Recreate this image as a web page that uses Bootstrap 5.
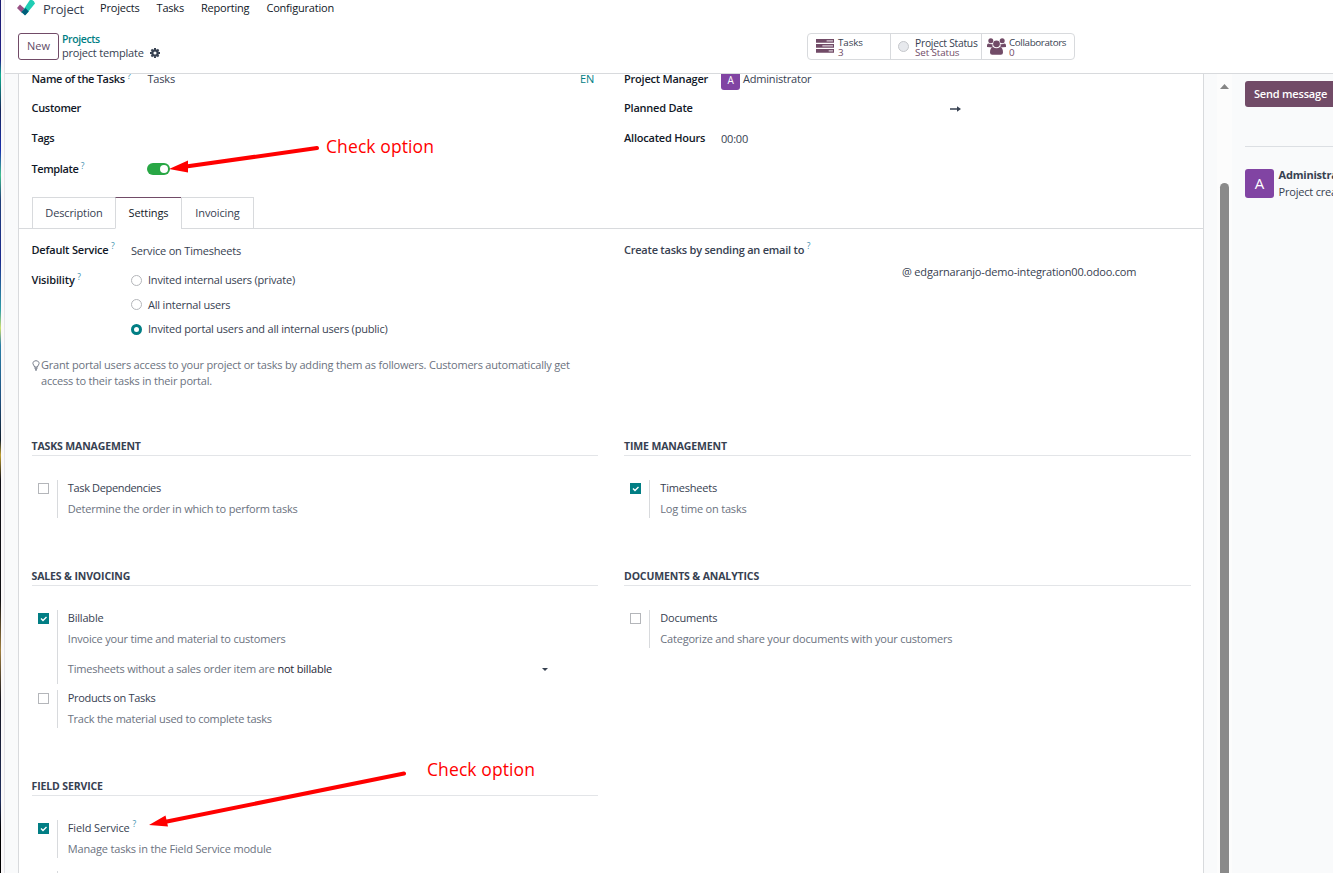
<!DOCTYPE html>
<html lang="en">
<head>
<meta charset="utf-8">
<title>project template</title>
<link rel="stylesheet" href="https://cdn.jsdelivr.net/npm/bootstrap@5.3.0/dist/css/bootstrap.min.css">
<style>
body{font:11px/16px "Open Sans","Noto Sans",sans-serif;color:#374151;letter-spacing:-.2px;height:873px;overflow:hidden;white-space:nowrap}
.edge{width:1px;background:linear-gradient(#1b1b70 0,#23238a 60px,#10b090 75px,#16265c 110px,#1a30b0 150px,#40c090 175px,#20407a 200px,#1b2a90 260px,#2f9fa8 310px,#d0e070 328px,#2a80a8 345px,#1f5080 400px,#102030 440px,#c0a030 455px,#101018 480px,#101014 600px,#a08040 650px,#151520 700px,#203060 800px,#000 830px)}
.gutter{width:4px;background:#fbf9fa;border-right:1px solid #e4e4e8}
.topnav{height:26px;padding-left:12px}
.topnav a{color:#111827;text-decoration:none;margin-top:-10px}
.topnav .brand-name{font-size:13px;margin:-8px 0 0 8px;color:#374151}
.panel{height:48px;border-bottom:1px solid #d8dadd;padding-left:13px}
.btn-new{width:41px;height:27px;border:1px solid #714b67;border-radius:3px;color:#5f4b66;padding:0 0 2px;font-size:11px;line-height:23px;letter-spacing:-.05px}
.teal{color:#017e84}
.stats{height:27px;width:268px;border:1px solid #d8dadd;border-radius:4px;font-size:9.8px;line-height:10px;letter-spacing:-.1px;margin-right:258px}
.stats>div+div{border-left:1px solid #d8dadd}
.stats .stat-text{padding-top:2px}
.plum{color:#714b67}
.dot{width:11px;height:11px;border-radius:50%;background:#e7e9ed;border:1px solid #c5c7cb}
.area{height:799px;overflow:hidden;background:#f9fafb}
.sheet{width:1186px;margin-left:13px;border:solid #d8dadd;border-width:0 1px;background:#fff}
.fields{margin-top:-10px;padding-left:12.5px;height:133px}
.lbl{font-weight:600;color:#111827;width:116px;letter-spacing:-.3px}
.lbl2{width:97px;letter-spacing:-.22px}
.h29{height:29px}.h30{height:30px}.h32{height:32px}
.q{color:#3a8fae;font-size:8.5px;font-weight:400;line-height:8px;vertical-align:2px;margin-left:0;top:-2.5px}
.avatar{background:#8144a3;color:#fff;border-radius:3px;text-align:center}
.toggle{width:23px;height:12px;border-radius:6px;background:#28a745;padding:2px;margin-left:-1px}
.toggle i{display:block;width:8px;height:8px;border-radius:50%;background:#fff;margin-left:11px}
.tabs{height:32px;padding-left:13px;border-bottom:1px solid #d8dadd}
.tabs div{height:32px;border:1px solid #d8dadd;text-align:center;line-height:30px;background:#fff;letter-spacing:-.12px}
.tabs .on{border-top-color:#714b67;border-bottom-color:#fff;color:#111827;margin-left:-1px}
.half{width:566.5px}
.radio{width:11px;height:11px;border:1px solid #b4b6ba;border-radius:50%;margin-right:6px}
.radio.on{border:3.5px solid #017e84}
.opt{height:24.5px}
.tip{color:#6b7280;margin-top:15px;height:82px}
.ttl{font-weight:700;font-size:10.5px;border-bottom:1px solid #e3e5e8;height:17px;line-height:15px;margin-bottom:24px;letter-spacing:-.13px}
.sec-a{height:130px}.sec-b{height:210px}
.item{margin-bottom:6px;height:38px}
.item.tall{height:74px}
.box{width:11px;height:11px;border:1px solid #b4b6ba;margin:3px 8px 0 6px}
.box.on{background:#017e84;border:0}
.box svg{display:block}
.body-col{border-left:1px solid #d8dadd;padding-left:10.3px;flex:1}
.muted{color:#6b7280;margin-top:5px}
.scroll{width:15px;background:#fcfcfc;margin-left:13px;padding:10px 3px 0}
.thumb{width:9px;height:720px;background:#8a8a8a;border-radius:5px;margin-top:94px}
.chat{padding-left:13px;width:101px;overflow:hidden}
.send{background:#714b67;color:#fff;font-weight:600;height:26px;line-height:26px;width:110px;border-radius:3px;padding-left:9px;margin-top:7px}
.note{position:absolute;color:#f00;font:400 17.5px/22px "Open Sans",sans-serif;letter-spacing:.1px}
.arrows{position:absolute;left:0;top:0;pointer-events:none}
</style>
<script src="https://cdn.jsdelivr.net/npm/bootstrap@5.3.0/dist/js/bootstrap.bundle.min.js"></script>
</head>
<body class="d-flex position-relative">
<div class="edge flex-shrink-0"></div><div class="gutter flex-shrink-0"></div>
<main class="flex-grow-1">
  <nav class="topnav d-flex align-items-center">
    <svg width="18" height="18" viewBox="0 0 18 18" style="margin-top:-10px"><path d="M0 9 3 5.500l5.500 5L5 14z" fill="#985184"/><path d="M4.500 13.500 13 .8q4-.3 5 3.700L8.500 16z" fill="#1fcdb4"/><path d="m4.500 13 4-4 3.300 3.600L8 16.500z" fill="#005e7a"/></svg>
    <a href="#" class="brand-name">Project</a>
    <a href="#" style="margin-left:16px">Projects</a><a href="#" style="margin-left:17px">Tasks</a><a href="#" style="margin-left:17px">Reporting</a><a href="#" style="margin-left:17px">Configuration</a>
  </nav>
  <header class="panel d-flex align-items-start">
    <button class="btn btn-new" style="margin-top:7px">New</button>
    <div style="margin:7px 0 0 3px;line-height:13px"><div class="teal" style="font-size:10.500px;font-weight:600;letter-spacing:-.38px">Projects</div>
      <div class="d-flex align-items-center"><span style="letter-spacing:-.2px">project template</span><svg width="10" height="10" viewBox="0 0 16 16" fill="none" stroke="#374151" style="margin-left:6px"><circle cx="8" cy="8" r="4.300" stroke-width="3.600"/><path d="M8 0v3M8 13v3M0 8h3M13 8h3M2.300 2.300l2 2M11.700 11.700l2 2M2.300 13.700l2-2M11.700 4.300l2-2" stroke-width="3.200"/></svg></div></div>
    <div class="stats d-flex ms-auto" style="margin-top:7px">
      <div class="d-flex align-items-center" style="width:82px;padding-left:8px"><svg width="18" height="14" viewBox="0 0 17 14" preserveAspectRatio="none" fill="#714b67" style="margin-top:-1px"><path d="M0 0h17v3.700H0zM0 5h17v3.700H0zM0 10h17v3.700H0z"/><path d="M10 1.200h6v1.300h-6zM6 6.200h10v1.300H6zM12 11.200h4v1.300h-4z" fill="#d8ccd5"/></svg><div class="stat-text" style="margin-left:4px"><div>Tasks</div><div class="plum">3</div></div></div>
      <div class="d-flex align-items-center" style="width:91px;padding-left:7px"><span class="dot"></span><div class="stat-text" style="margin-left:6px"><div style="letter-spacing:-.26px;font-size:10.300px">Project Status</div><div class="plum" style="letter-spacing:-.1px">Set Status</div></div></div>
      <div class="d-flex align-items-center" style="padding-left:5px"><svg width="19" height="17" viewBox="0 0 19 17" fill="#714b67" style="margin-top:-1px"><circle cx="3.800" cy="2.800" r="2.500"/><circle cx="15.200" cy="2.800" r="2.500"/><path d="M0 9V7.500Q0 5.500 1.500 5.500 4 6.500 5.500 6q-.5 2.500.5 3.500zM19 9V7.500q0-2-1.500-2-2.500 1-4 .5.5 2.500-.5 3.500z"/><circle cx="9.500" cy="5.800" r="3.400"/><path d="M3 14.500q0-5 3-5.500 3.500 2.500 7 0 3 .5 3 5.500 0 2.300-2.200 2.300H5.200Q3 16.800 3 14.500z"/></svg><div class="stat-text" style="margin-left:3px;letter-spacing:-.36px"><div>Collaborators</div><div class="plum">0</div></div></div>
    </div>
  </header>
  <div class="area d-flex">
    <section class="sheet flex-shrink-0">
      <div class="fields d-flex">
        <div style="width:592.500px">
          <div class="d-flex align-items-center h30"><span class="lbl">Name of the Tasks <sup class="q">?</sup></span><span>Tasks</span><span class="teal ms-auto" style="margin-right:30px">EN</span></div>
          <div class="d-flex align-items-center h29"><span class="lbl" style="margin-top:-1px">Customer</span></div>
          <div class="d-flex align-items-center h30"><span class="lbl">Tags</span></div>
          <div class="d-flex align-items-center h32"><span class="lbl" style="letter-spacing:-.4px">Template <sup class="q">?</sup></span><span class="toggle"><i></i></span></div>
        </div>
        <div>
          <div class="d-flex align-items-center h30"><span class="lbl lbl2">Project Manager</span><span class="avatar" style="width:19px;height:19px;line-height:18px;margin:3px 3px 0 0;font-size:10px">A</span><span>Administrator</span></div>
          <div class="d-flex align-items-center h29"><span class="lbl lbl2" style="margin-top:-1px">Planned Date</span><svg width="11" height="6" viewBox="0 0 11 6" style="margin-left:229px"><path d="M0 2.200h7V.3L11 3 7 5.700V3.800H0z" fill="#374151"/></svg></div>
          <div class="d-flex align-items-center h30"><span class="lbl lbl2">Allocated Hours</span><span style="padding-top:2px">00:00</span></div>
        </div>
      </div>
      <div class="tabs d-flex"><div style="width:84px">Description</div><div class="on" style="width:67px">Settings</div><div style="width:73px;margin-left:-1px">Invoicing</div></div>
      <div style="padding:7px 0 0 12.500px">
        <div class="d-flex">
          <div style="width:592.500px">
            <div class="d-flex align-items-center h29"><span class="lbl" style="width:99.500px;margin-top:-2px;letter-spacing:-.2px">Default Service <sup class="q">?</sup></span><span>Service on Timesheets</span></div>
            <div class="d-flex" style="padding-top:3px"><span class="lbl" style="width:99.500px;padding-top:4px;letter-spacing:-.15px">Visibility <sup class="q">?</sup></span>
              <div><div class="opt d-flex align-items-center"><i class="radio"></i>Invited internal users (private)</div><div class="opt d-flex align-items-center"><i class="radio"></i>All internal users</div><div class="opt d-flex align-items-center"><i class="radio on"></i>Invited portal users and all internal users (public)</div></div></div>
          </div>
          <div class="half"><div class="h29" style="font-weight:600;padding-top:5.500px;letter-spacing:-.23px">Create tasks by sending an email to <sup class="q">?</sup></div><div style="margin-left:278px;margin-top:-1px;letter-spacing:-.18px">@ edgarnaranjo-demo-integration00.odoo.com</div></div>
        </div>
        <div class="tip d-flex"><svg width="8" height="11" viewBox="0 0 8 11" fill="none" stroke="#6b7280" style="margin:3px 1px 0 .5px"><path d="M2.500 7Q2.500 6 1.500 5 .5 3.500 1.200 2.200 2 .7 4 .7t2.800 1.500Q7.500 3.500 6.500 5q-1 1-1 2z" stroke-width=".9"/><path d="M2.500 8.200h3M3 9.800h2" stroke-width="1.300"/></svg><div>Grant portal users access to your project or tasks by adding them as followers. Customers automatically get<br>access to their tasks in their portal.</div></div>
        <div class="d-flex sec-a">
          <div class="half" style="margin-right:26px"><div class="ttl">TASKS MANAGEMENT</div><div class="item d-flex"><i class="box"></i><div class="body-col"><div style="letter-spacing:-.35px">Task Dependencies</div><div class="muted">Determine the order in which to perform tasks</div></div></div></div>
          <div class="half"><div class="ttl">TIME MANAGEMENT</div><div class="item d-flex"><i class="box on"><svg width="11" height="11"><path d="m3 5.500 2 2 3.500-3.500" fill="none" stroke="#fff" stroke-width="1.400"/></svg></i><div class="body-col"><div>Timesheets</div><div class="muted">Log time on tasks</div></div></div></div>
        </div>
        <div class="d-flex sec-b">
          <div class="half" style="margin-right:26px"><div class="ttl">SALES &amp; INVOICING</div>
            <div class="item tall d-flex"><i class="box on"><svg width="11" height="11"><path d="m3 5.500 2 2 3.500-3.500" fill="none" stroke="#fff" stroke-width="1.400"/></svg></i><div class="body-col"><div>Billable</div><div class="muted">Invoice your time and material to customers</div><div class="muted d-flex align-items-center" style="margin-top:14px"><span>Timesheets without a sales order item are <span style="color:#1f2937">not billable</span></span><svg class="ms-auto" width="6" height="3" style="margin:1px 50px 0 0"><path d="M0 0h6L3 3z" fill="#374151"/></svg></div></div></div>
            <div class="item d-flex"><i class="box"></i><div class="body-col"><div style="letter-spacing:-.33px">Products on Tasks</div><div class="muted" style="letter-spacing:-.24px">Track the material used to complete tasks</div></div></div></div>
          <div class="half"><div class="ttl">DOCUMENTS &amp; ANALYTICS</div><div class="item d-flex"><i class="box"></i><div class="body-col"><div>Documents</div><div class="muted">Categorize and share your documents with your customers</div></div></div></div>
        </div>
        <div class="half"><div class="ttl">FIELD SERVICE</div><div class="item d-flex" style="margin-bottom:13px"><i class="box on"><svg width="11" height="11"><path d="m3 5.500 2 2 3.500-3.500" fill="none" stroke="#fff" stroke-width="1.400"/></svg></i><div class="body-col"><div style="letter-spacing:-.12px">Field Service <sup class="q">?</sup></div><div class="muted" style="letter-spacing:-.17px">Manage tasks in the Field Service module</div></div></div><div class="item d-flex"><div class="body-col" style="margin-left:25px"></div></div></div>
      </div>
    </section>
    <div class="scroll flex-shrink-0"><svg class="d-block" width="9" height="5"><path d="M4.500 0 9 5H0z" fill="#858585"/></svg><div class="thumb"></div></div>
    <aside class="chat flex-shrink-0"><div class="send">Send message</div><div style="border-top:1px solid #dcdfe3;margin-top:39px;padding-top:22px" class="d-flex"><span class="avatar flex-shrink-0" style="width:29px;height:29px;line-height:29px;font-size:15px">A</span><div style="margin:-3px 0 0 4.500px;line-height:17px"><b>Administrator</b><br>Project created</div></div></aside>
  </div>
</main>
<svg class="arrows" width="560" height="873" fill="#f00" stroke="#f00"><path d="M317 148 186 166.500M404 773.500 162 822.500" stroke-width="4" stroke-linecap="round"/><path d="m169 169 19-8.500v12zM149 825l16.500-9.500 2.500 11z" stroke="none"/></svg>
<div class="note" style="left:326px;top:135px">Check option</div><div class="note" style="left:427px;top:758px">Check option</div>
</body>
</html>
